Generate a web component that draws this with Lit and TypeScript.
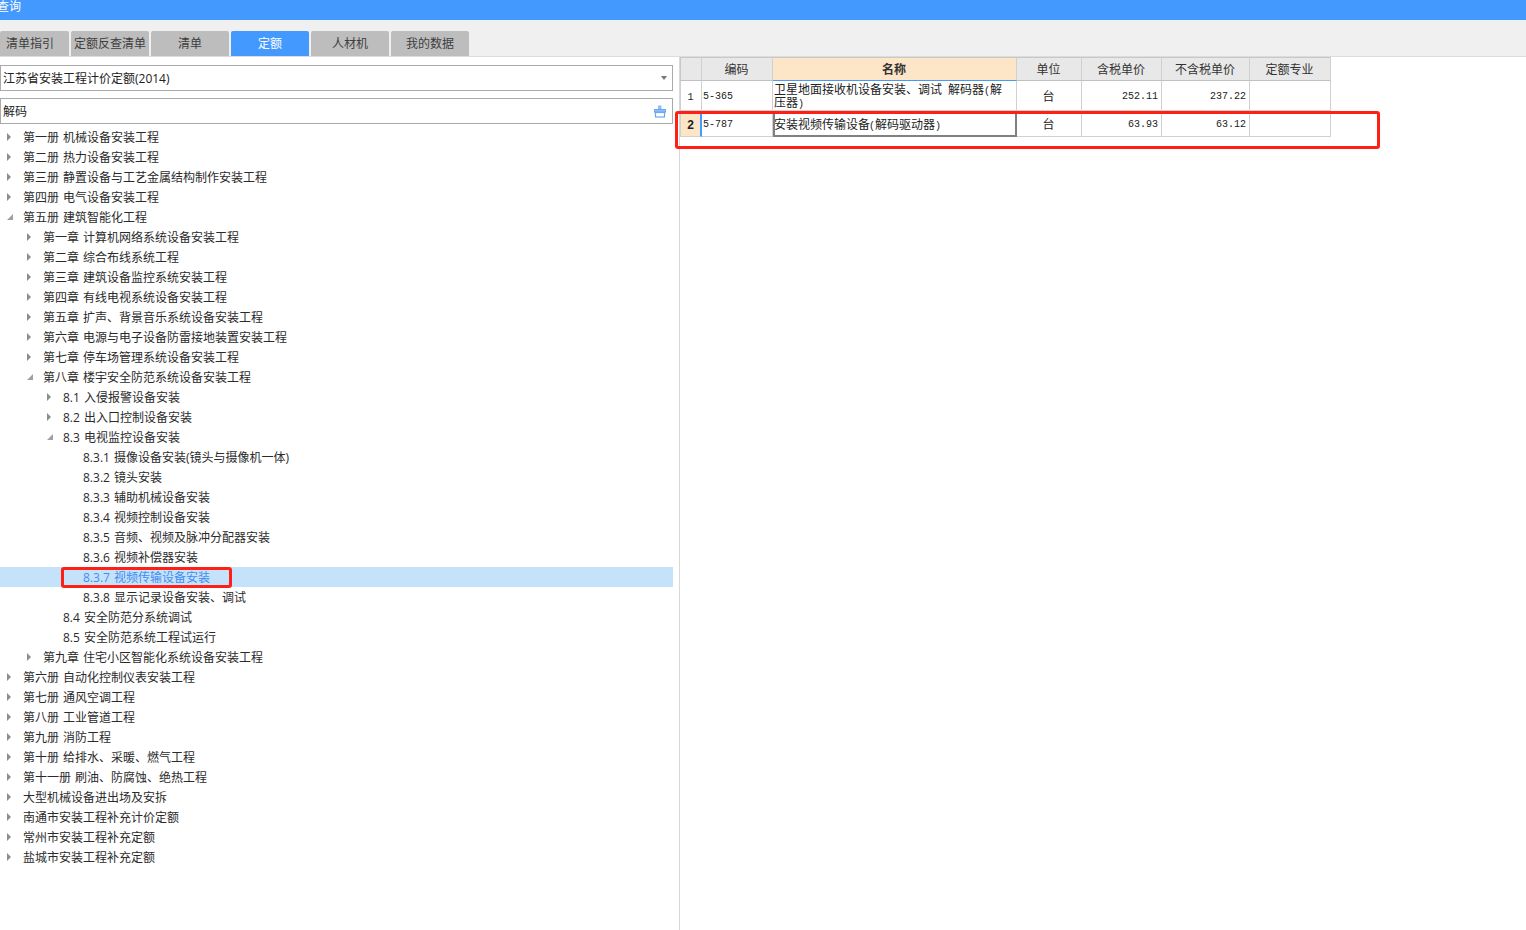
import { LitElement, html, css, svg } from "lit";
import { customElement } from "lit/decorators.js";

type Node = [number, string, "r" | "d" | "", boolean?];
const tree: Node[] = [
  [0, "第一册 机械设备安装工程", "r"],
  [0, "第二册 热力设备安装工程", "r"],
  [0, "第三册 静置设备与工艺金属结构制作安装工程", "r"],
  [0, "第四册 电气设备安装工程", "r"],
  [0, "第五册 建筑智能化工程", "d"],
  [1, "第一章 计算机网络系统设备安装工程", "r"],
  [1, "第二章 综合布线系统工程", "r"],
  [1, "第三章 建筑设备监控系统安装工程", "r"],
  [1, "第四章 有线电视系统设备安装工程", "r"],
  [1, "第五章 扩声、背景音乐系统设备安装工程", "r"],
  [1, "第六章 电源与电子设备防雷接地装置安装工程", "r"],
  [1, "第七章 停车场管理系统设备安装工程", "r"],
  [1, "第八章 楼宇安全防范系统设备安装工程", "d"],
  [2, "8.1 入侵报警设备安装", "r"],
  [2, "8.2 出入口控制设备安装", "r"],
  [2, "8.3 电视监控设备安装", "d"],
  [3, "8.3.1 摄像设备安装(镜头与摄像机一体)", ""],
  [3, "8.3.2 镜头安装", ""],
  [3, "8.3.3 辅助机械设备安装", ""],
  [3, "8.3.4 视频控制设备安装", ""],
  [3, "8.3.5 音频、视频及脉冲分配器安装", ""],
  [3, "8.3.6 视频补偿器安装", ""],
  [3, "8.3.7 视频传输设备安装", "", true],
  [3, "8.3.8 显示记录设备安装、调试", ""],
  [2, "8.4 安全防范分系统调试", ""],
  [2, "8.5 安全防范系统工程试运行", ""],
  [1, "第九章 住宅小区智能化系统设备安装工程", "r"],
  [0, "第六册 自动化控制仪表安装工程", "r"],
  [0, "第七册 通风空调工程", "r"],
  [0, "第八册 工业管道工程", "r"],
  [0, "第九册 消防工程", "r"],
  [0, "第十册 给排水、采暖、燃气工程", "r"],
  [0, "第十一册 刷油、防腐蚀、绝热工程", "r"],
  [0, "大型机械设备进出场及安拆", "r"],
  [0, "南通市安装工程补充计价定额", "r"],
  [0, "常州市安装工程补充定额", "r"],
  [0, "盐城市安装工程补充定额", "r"],
];

const tabs = ["清单指引", "定额反查清单", "清单", "定额", "人材机", "我的数据"];
const heads = ["", "编码", "名称", "单位", "含税单价", "不含税单价", "定额专业"];

const arrow = (k: string) =>
  k === "r"
    ? svg`<svg class="arrow" width="8" height="10" viewBox="0 0 8 10"><path d="M2 1 L6 5 L2 9 Z" fill="#8c8c8c"/></svg>`
    : k === "d"
    ? svg`<svg class="arrow" width="8" height="10" viewBox="0 0 8 10"><path d="M8 2 L8 8 L2 8 Z" fill="#a0a0a0"/></svg>`
    : html`<span class="arrow"></span>`;

@customElement("app-root")
export class AppRoot extends LitElement {
  static styles = css`
    :host { display: block; width: 1526px; height: 930px; position: relative; overflow: hidden; background: #fff;
      font-family: "Open Sans", "Noto Sans CJK SC", sans-serif; font-size: 12px; color: #333; }
    * { box-sizing: border-box; }
    .title { height: 20px; background: #4499ff; color: #fff; line-height: 14px; overflow: hidden; }
    .title span { display: block; margin-left: -3px; margin-top: -1px; font-family: "Noto Sans CJK SC", sans-serif; }
    .tabbar { height: 37px; background: #f0f0f0; border-bottom: 1px solid #dcdcdc; padding-top: 11px; display: flex; gap: 2px; }
    .tab { width: 78px; height: 25px; background: #bdbdbd; border-radius: 2px 2px 0 0; text-align: center; line-height: 25px; color: #3d3d3d; white-space: nowrap; }
    .tab:first-child { width: 69px; padding-right: 9px; }
    .tab.on { background: #4499ff; color: #fff; }
    .main { display: flex; height: 873px; }
    .left { width: 680px; border-right: 1px solid #d8d8d8; padding-top: 8px; }
    .field { width: 673px; height: 26px; border: 1px solid #aaa; display: flex; align-items: center; justify-content: space-between; padding: 0 5px 0 2px; color: #222; }
    .field + .field { margin-top: 7px; padding-right: 6px; }
    .caret { width: 0; height: 0; border: 3px solid transparent; border-top: 4px solid #777; border-bottom: 0; }
    .tree { margin-top: 3px; width: 673px; }
    .row { height: 20px; line-height: 20px; display: flex; align-items: center; white-space: nowrap; color: #2a2a2a; word-spacing: 1px; }
    .row span.t { padding-top: 2px; }
    .row.sel { background: #c5e2fb; color: #3f8ef0; }
    .arrow { display: block; width: 8px; height: 10px; flex: none; margin: 0 10px 0 5px; }
    .l1 { padding-left: 20px; } .l2 { padding-left: 40px; } .l3 { padding-left: 60px; }
    .grid { display: grid; grid-template-columns: 22px 71px 244px 65px 80px 88px 81px; grid-template-rows: 24px 30px 26px; align-content: start; width: 651px; height: 80px; }
    .c { border-right: 1px solid #d0d0d0; border-bottom: 1px solid #d0d0d0; display: flex; align-items: center; color: #222; overflow: hidden; }
    .h { background: #e8e8e8; justify-content: center; border-top: 1px solid #c8c8c8; border-bottom-color: #c0c0c0; color: #333; padding-right: 1px; }
    .h.name { background: #fde6c8; font-weight: 700; border-bottom: 1px solid #4499ff; }
    .h.first { border-left: 1px solid #c8c8c8; }
    .num { justify-content: center; font-family: "Liberation Mono", monospace; font-size: 10px; border-left: 1px solid #d0d0d0; padding: 4px 1px 0 0; }
    .num.act { background: #fde6c8; font-family: "Liberation Sans", sans-serif; font-weight: 700; font-size: 12px; border-right: 2px solid #4499ff; padding: 3px 0 0; }
    .code { font-family: "Liberation Mono", monospace; font-size: 10px; padding-left: 1px; padding-top: 1px; }
    .text { display: block; padding: 1px 10px 0 1px; line-height: 13px; font-family: "Noto Sans CJK SC", sans-serif; }
    .text .w { font-family: "Liberation Mono", monospace; font-size: 10px; line-height: 0; }
    .text.act { display: flex; border: 2px solid #808080; padding: 0 0 2px; }
    .text.act span:first-child { margin-left: -1px; }
    .ctr { justify-content: center; padding-right: 1px; }
    .price { justify-content: flex-end; padding-right: 3px; padding-top: 1px; font-family: "Liberation Mono", monospace; font-size: 10px; }
    .icon { display: block; }
    .mark { position: absolute; border: 3px solid #ff1f14; border-radius: 3px; pointer-events: none; }
    .m1 { left: 675px; top: 111px; width: 705px; height: 38px; }
    .m2 { left: 61px; top: 567px; width: 171px; height: 21px; }
  `;

  render() {
    return html`
      <div class="title"><span>查询</span></div>
      <div class="tabbar">
        ${tabs.map((t) => html`<div class="tab ${t === "定额" ? "on" : ""}">${t}</div>`)}
      </div>
      <div class="main">
        <div class="left">
          <div class="field"><span>江苏省安装工程计价定额(2014)</span><span class="caret"></span></div>
          <div class="field">
            <span>解码</span>
            <svg class="icon" width="12" height="13" viewBox="0 0 12 13">
              <rect x="4" y="0.5" width="3.5" height="3.5" fill="#8fbdf5"/>
              <rect x="0.5" y="4.5" width="11" height="2.6" fill="#8fbdf5" stroke="#6aa8ef" stroke-width="1"/>
              <rect x="1.5" y="7.5" width="9" height="4.5" fill="#fff" stroke="#6aa8ef" stroke-width="1.2"/>
            </svg>
          </div>
          <div class="tree">
            ${tree.map(
              ([l, t, k, sel]) => html`<div class="row l${l} ${sel ? "sel" : ""}">${arrow(k)}<span class="t">${t}</span></div>`
            )}
          </div>
        </div>
        <div class="grid">
          ${heads.map(
            (h, i) => html`<div class="c h ${i === 2 ? "name" : ""} ${i === 0 ? "first" : ""}">${h}</div>`
          )}
          <div class="c num">1</div>
          <div class="c code">5-365</div>
          <div class="c text">卫星地面接收机设备安装、调试<span class="w"> </span>解码器<span class="w">(</span>解压器<span class="w">)</span></div>
          <div class="c ctr">台</div>
          <div class="c price">252.11</div>
          <div class="c price">237.22</div>
          <div class="c"></div>
          <div class="c num act">2</div>
          <div class="c code">5-787</div>
          <div class="c text act"><span>安装视频传输设备<span class="w">(</span>解码驱动器<span class="w">)</span></span></div>
          <div class="c ctr">台</div>
          <div class="c price">63.93</div>
          <div class="c price">63.12</div>
          <div class="c"></div>
        </div>
      </div>
      <div class="mark m1"></div>
      <div class="mark m2"></div>
    `;
  }
}
